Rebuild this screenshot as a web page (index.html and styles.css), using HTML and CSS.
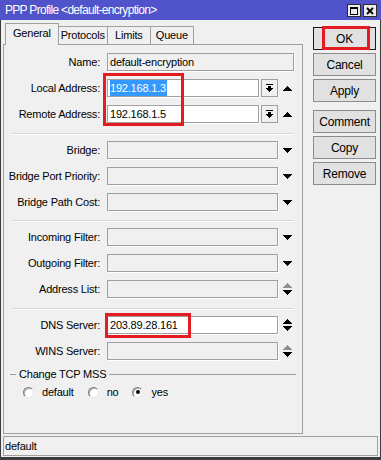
FILE: index.html
```html
<!DOCTYPE html>
<html lang="en">
<head>
    <meta charset="UTF-8">
    <title>PPP Profile &lt;default-encryption&gt;</title>
    <link rel="stylesheet" href="styles.css">
</head>
<body>

<div class="window">
    <div class="titlebar">
        <span class="title">PPP Profile &lt;default-encryption&gt;</span>
        <div class="title-btns">
            <span class="tbtn"><svg width="8" height="8"><path d="M0 0h8v2H0zM0 2h1v6H0zM7 2h1v6H7zM0 7h8v1H0z"/></svg></span>
            <span class="tbtn"><svg width="8" height="8"><path d="M1 1l6 6M7 1l-6 6" stroke="#000" stroke-width="1.8"/></svg></span>
        </div>
    </div>

    <div class="frame">
        <div class="main">
            <div class="left">
                <div class="tabs">
                    <span class="tab active">General</span>
                    <span class="tab">Protocols</span>
                    <span class="tab">Limits</span>
                    <span class="tab">Queue</span>
                </div>

                <div class="panel">
                    <div class="row">
                        <span class="label">Name:</span>
                        <div class="input name">default-encryption</div>
                    </div>
                    <div class="row">
                        <span class="label">Local Address:</span>
                        <div class="input white"><span class="sel">192.168.1.3</span></div>
                        <span class="ddbtn"><svg width="7" height="8"><path d="M0 0h7v1H0zM2 2h3v2H2zM0 4h7v1H0zM1 5h5v1H1zM2 6h3v1H2zM3 7h1v1H3z"/></svg></span>
                        <span class="ico"><svg width="9" height="5"><path d="M4 0h1v1H4zM3 1h3v1H3zM2 2h5v1H2zM1 3h7v1H1zM0 4h9v1H0z"/></svg></span>
                    </div>
                    <div class="row">
                        <span class="label">Remote Address:</span>
                        <div class="input white">192.168.1.5</div>
                        <span class="ddbtn"><svg width="7" height="8"><path d="M0 0h7v1H0zM2 2h3v2H2zM0 4h7v1H0zM1 5h5v1H1zM2 6h3v1H2zM3 7h1v1H3z"/></svg></span>
                        <span class="ico"><svg width="9" height="5"><path d="M4 0h1v1H4zM3 1h3v1H3zM2 2h5v1H2zM1 3h7v1H1zM0 4h9v1H0z"/></svg></span>
                    </div>

                    <div class="sep"></div>

                    <div class="row">
                        <span class="label">Bridge:</span>
                        <div class="input"></div>
                        <span class="ico"><svg width="9" height="5"><path d="M0 0h9v1H0zM1 1h7v1H1zM2 2h5v1H2zM3 3h3v1H3zM4 4h1v1H4z"/></svg></span>
                    </div>
                    <div class="row">
                        <span class="label">Bridge Port Priority:</span>
                        <div class="input"></div>
                        <span class="ico"><svg width="9" height="5"><path d="M0 0h9v1H0zM1 1h7v1H1zM2 2h5v1H2zM3 3h3v1H3zM4 4h1v1H4z"/></svg></span>
                    </div>
                    <div class="row">
                        <span class="label">Bridge Path Cost:</span>
                        <div class="input"></div>
                        <span class="ico"><svg width="9" height="5"><path d="M0 0h9v1H0zM1 1h7v1H1zM2 2h5v1H2zM3 3h3v1H3zM4 4h1v1H4z"/></svg></span>
                    </div>

                    <div class="sep sep-b"></div>

                    <div class="row">
                        <span class="label">Incoming Filter:</span>
                        <div class="input"></div>
                        <span class="ico"><svg width="9" height="5"><path d="M0 0h9v1H0zM1 1h7v1H1zM2 2h5v1H2zM3 3h3v1H3zM4 4h1v1H4z"/></svg></span>
                    </div>
                    <div class="row">
                        <span class="label">Outgoing Filter:</span>
                        <div class="input"></div>
                        <span class="ico"><svg width="9" height="5"><path d="M0 0h9v1H0zM1 1h7v1H1zM2 2h5v1H2zM3 3h3v1H3zM4 4h1v1H4z"/></svg></span>
                    </div>
                    <div class="row">
                        <span class="label">Address List:</span>
                        <div class="input"></div>
                        <span class="ico">
                            <svg class="dim" width="9" height="5"><path d="M4 0h1v1H4zM3 1h3v1H3zM2 2h5v1H2zM1 3h7v1H1zM0 4h9v1H0z"/></svg>
                            <svg width="9" height="5"><path d="M0 0h9v1H0zM1 1h7v1H1zM2 2h5v1H2zM3 3h3v1H3zM4 4h1v1H4z"/></svg>
                        </span>
                    </div>

                    <div class="sep"></div>

                    <div class="row">
                        <span class="label">DNS Server:</span>
                        <div class="input white">203.89.28.161</div>
                        <span class="ico">
                            <svg width="9" height="5"><path d="M4 0h1v1H4zM3 1h3v1H3zM2 2h5v1H2zM1 3h7v1H1zM0 4h9v1H0z"/></svg>
                            <svg width="9" height="5"><path d="M0 0h9v1H0zM1 1h7v1H1zM2 2h5v1H2zM3 3h3v1H3zM4 4h1v1H4z"/></svg>
                        </span>
                    </div>
                    <div class="row">
                        <span class="label">WINS Server:</span>
                        <div class="input"></div>
                        <span class="ico">
                            <svg class="dim" width="9" height="5"><path d="M4 0h1v1H4zM3 1h3v1H3zM2 2h5v1H2zM1 3h7v1H1zM0 4h9v1H0z"/></svg>
                            <svg width="9" height="5"><path d="M0 0h9v1H0zM1 1h7v1H1zM2 2h5v1H2zM3 3h3v1H3zM4 4h1v1H4z"/></svg>
                        </span>
                    </div>

                    <fieldset class="group">
                        <legend>Change TCP MSS</legend>
                        <div class="radios">
                            <span class="opt"><span class="radio"></span>default</span>
                            <span class="opt"><span class="radio"></span>no</span>
                            <span class="opt"><span class="radio checked"></span>yes</span>
                        </div>
                    </fieldset>
                </div>
            </div>

            <div class="buttons">
                <span class="btn default">OK</span>
                <span class="btn">Cancel</span>
                <span class="btn">Apply</span>
                <span class="btn spaced">Comment</span>
                <span class="btn">Copy</span>
                <span class="btn">Remove</span>
            </div>
        </div>

        <div class="status">default</div>
    </div>

    <!-- red highlight boxes -->
    <div class="mark mark-ok"></div>
    <div class="mark mark-addr"></div>
    <div class="mark mark-dns"></div>
</div>

</body>
</html>
```

FILE: styles.css
```css
* {
    margin: 0;
    padding: 0;
    box-sizing: border-box;
}

body {
    width: 381px;
    height: 460px;
    overflow: hidden;
    background: #f0f0f0;
    color: #000;
    font-family: "Liberation Sans", Arial, sans-serif;
    font-size: 11px;
    letter-spacing: -0.2px;
}

.window {
    position: relative;
    width: 381px;
    height: 460px;
    display: flex;
    flex-direction: column;
}

/* Title bar */
.titlebar {
    height: 20px;
    background: #5053c9;
    color: #fff;
    display: flex;
    justify-content: space-between;
    align-items: center;
    padding: 0 4px 0 5px;
}

.title {
    font-size: 12px;
    letter-spacing: -0.7px;
}

.title-btns {
    display: flex;
    gap: 2px;
    align-self: flex-start;
    margin-top: 4px;
}

.tbtn {
    width: 14px;
    height: 13px;
    background: #ececec;
    border: 1px solid #2a2a2a;
    display: flex;
    align-items: center;
    justify-content: center;
}

/* Frame */
.frame {
    flex: 1;
    display: flex;
    flex-direction: column;
    border: 1px solid #3c3c3c;
    border-top: none;
    border-bottom-width: 3px;
    padding: 3px 2px 1px;
}

.main {
    flex: 1;
    display: flex;
}

/* Tabs */
.tabs {
    height: 21px;
    display: flex;
    align-items: flex-end;
    padding-left: 2px;
}

.tab {
    min-width: 44px;
    height: 18px;
    line-height: 16px;
    padding: 0 2px;
    margin-left: -1px;
    text-align: center;
    border: 1px solid #a0a0a0;
    border-bottom: none;
    background: #f0f0f0;
}

.tab.active {
    position: relative;
    z-index: 1;
    height: 22px;
    line-height: 19px;
    padding: 0 7px;
    margin-left: 0;
    margin-bottom: -1px;
}

.panel {
    width: 300px;
    height: 390px;
    border: 1px solid #a0a0a0;
    background: #f0f0f0;
}

/* Form rows */
.row {
    display: flex;
    align-items: center;
    height: 18px;
    margin-top: 8px;
    padding-right: 5px;
}

.sep + .row {
    margin-top: 7px;
}

.label {
    width: 96px;
    margin-right: 7px;
    text-align: right;
    white-space: nowrap;
}

.input {
    flex: 1;
    height: 18px;
    line-height: 16px;
    padding-left: 2px;
    border: 1px solid #a0a0a0;
    background: #f0f0f0;
    box-shadow: 1px 1px 0 #fff;
    white-space: nowrap;
    overflow: hidden;
}

.input.white {
    background: #fff;
}

.input.name {
    margin-right: 3px;
}

.sel {
    display: inline-block;
    background: #3399ff;
    color: #fff;
    padding-right: 1px;
}

.ddbtn {
    flex: none;
    width: 17px;
    height: 18px;
    margin-left: 2px;
    border: 1px solid #a0a0a0;
    background: #f0f0f0;
    display: flex;
    align-items: center;
    justify-content: center;
}

.ico {
    flex: none;
    width: 19px;
    display: flex;
    flex-direction: column;
    align-items: center;
    justify-content: center;
    gap: 2px;
}

.ico svg {
    display: block;
}

.ico .dim {
    fill: #8b918b;
}

.sep {
    height: 1px;
    margin: 10px 8px 0;
    background: #d6d6d6;
    box-shadow: 0 1px 0 #fff;
}

.sep-b {
    margin-top: 9px;
}

/* TCP MSS group */
.group {
    margin: 8px 6px 0;
    border: none;
    border-top: 1px solid #a0a0a0;
}

.group legend {
    margin-left: 6px;
    padding: 0 3px;
    line-height: 13px;
}

.radios {
    display: flex;
    align-items: center;
    margin-top: 5px;
    padding-left: 13px;
}

.opt {
    display: flex;
    align-items: center;
    margin-right: 14px;
}

.radio {
    width: 11px;
    height: 11px;
    margin-right: 8px;
    border-radius: 50%;
    border: 1px solid;
    border-color: #7a7a7a #e8e8e8 #e8e8e8 #7a7a7a;
    background: #fff;
    box-shadow: inset 1px 1px 0 #b0b0b0;
    display: flex;
    align-items: center;
    justify-content: center;
}

.radio.checked::after {
    content: "";
    width: 4px;
    height: 4px;
    border-radius: 50%;
    background: #000;
}

/* Side buttons */
.buttons {
    width: 63px;
    margin: 4px 0 0 10px;
    display: flex;
    flex-direction: column;
}

.btn {
    height: 23px;
    margin-bottom: 3px;
    border: 1px solid #8c8c8c;
    background: #e1e1e1;
    display: flex;
    align-items: center;
    justify-content: center;
    font-size: 12px;
}

.btn.default {
    border-color: #1a1a1a;
}

.btn.spaced {
    margin-top: 5px;
}

/* Status bar */
.status {
    height: 20px;
    margin-top: 2px;
    padding-left: 1px;
    line-height: 18px;
    border: 1px solid #a0a0a0;
    background: #f0f0f0;
}

/* Red annotation boxes */
.mark {
    position: absolute;
    border: 3px solid #e41b23;
}

.mark-ok {
    left: 322px;
    top: 26px;
    width: 48px;
    height: 24px;
}

.mark-addr {
    left: 103px;
    top: 73px;
    width: 81px;
    height: 53px;
}

.mark-dns {
    left: 105px;
    top: 313px;
    width: 86px;
    height: 25px;
}
```
